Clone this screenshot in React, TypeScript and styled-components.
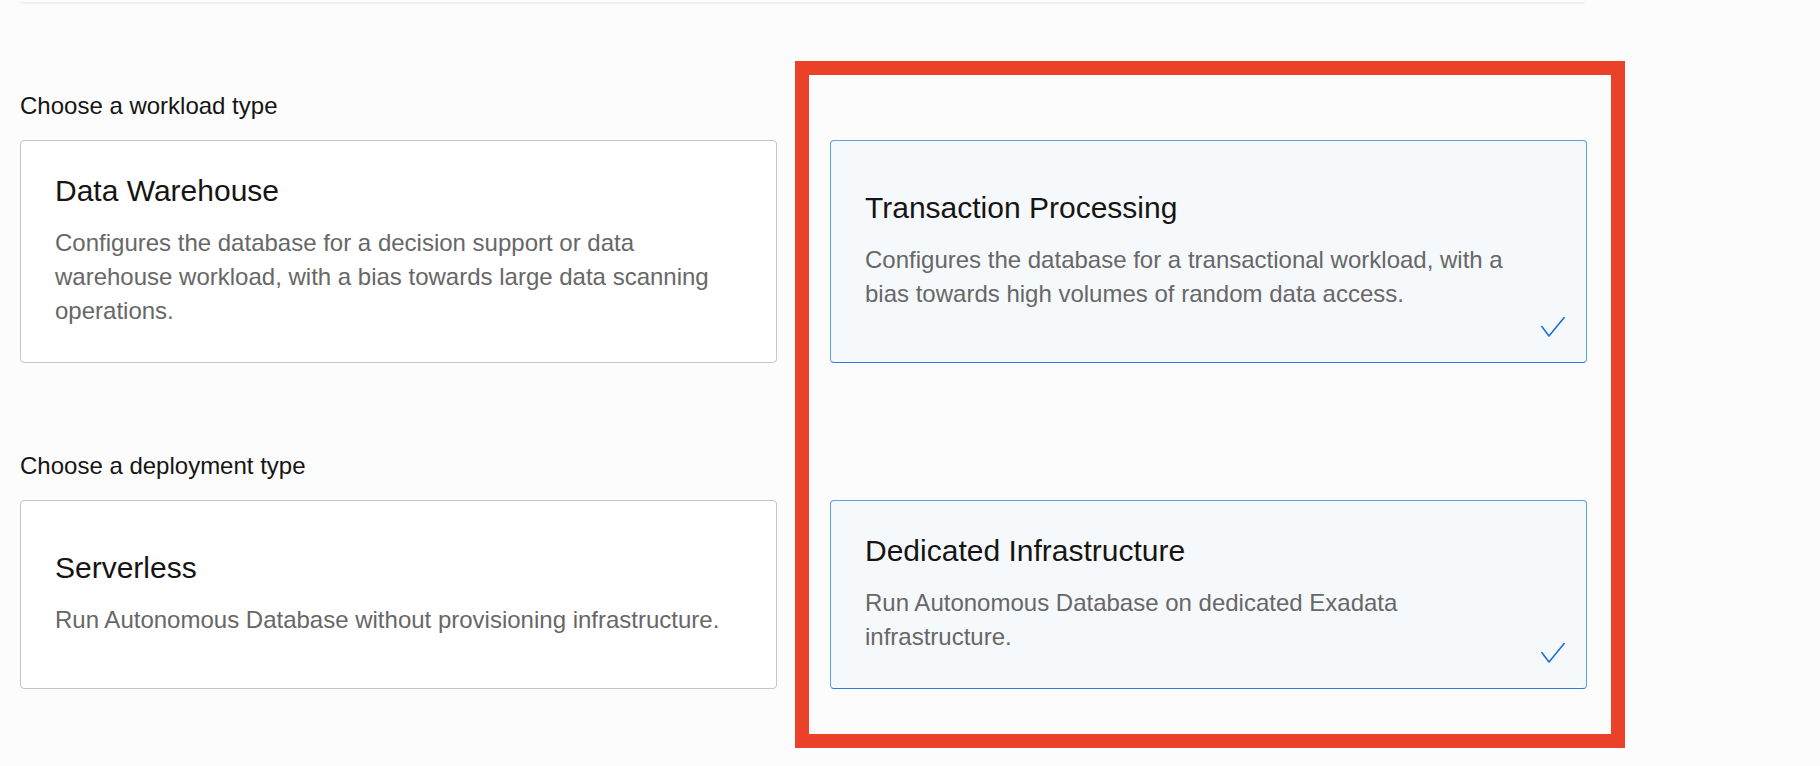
import React from "react";
import styled, { createGlobalStyle } from "styled-components";

const Global = createGlobalStyle`
  html, body { margin: 0; padding: 0; background: #fcfcfc; }
  body { font-family: "Liberation Sans", Arial, Helvetica, sans-serif; }
  * { box-sizing: border-box; }
`;

const Page = styled.div`
  position: relative;
  width: 1820px;
  height: 766px;
  overflow: hidden;
  padding-left: 20px;
`;

const TopCardStub = styled.div`
  width: 1565px;
  height: 3px;
  background: #ffffff;
  border-bottom: 1px solid #ececec;
  border-radius: 0 0 4px 4px;
  box-shadow: 0 1px 2px rgba(0, 0, 0, 0.05);
`;

const Section = styled.section<{ $gap: number }>`
  display: grid;
  grid-template-columns: 757px 757px;
  column-gap: 53px;
  margin-top: ${(p) => p.$gap}px;
`;

const Label = styled.div`
  grid-column: 1 / span 2;
  font-size: 24px;
  line-height: 33.6px;
  color: #161513;
  margin-bottom: 17.6px;
`;

const Card = styled.div<{ $selected?: boolean }>`
  position: relative;
  display: flex;
  flex-direction: column;
  justify-content: center;
  padding: 32px 40px 34px 34px;
  border-radius: 4px;
  border: 1px solid ${(p) => (p.$selected ? "#5f9fea" : "#c3c6ca")};
  border-bottom-color: ${(p) => (p.$selected ? "#2a7ddf" : "#c3c6ca")};
  background: ${(p) => (p.$selected ? "#f6f9fc" : "#ffffff")};
`;

const Title = styled.div`
  font-size: 30px;
  line-height: 36px;
  color: #161513;
  margin-bottom: 17px;
`;

const Desc = styled.div`
  font-size: 24px;
  line-height: 34px;
  color: #676767;
`;

const Check = styled.svg`
  position: absolute;
  right: 21px;
  bottom: 25px;
  width: 24px;
  height: 20px;
`;

const Highlight = styled.div`
  position: absolute;
  left: 795px;
  top: 61px;
  width: 830px;
  height: 687px;
  border: 14px solid #ea4128;
  pointer-events: none;
`;

type Opt = { title: string; desc: string; selected?: boolean };

const CheckMark = () => (
  <Check viewBox="0 0 24 20">
    <polyline
      points="0.8,9.6 8,19 23.2,0.6"
      fill="none"
      stroke="#1d6fd5"
      strokeWidth="1.6"
      strokeLinecap="round"
      strokeLinejoin="round"
    />
  </Check>
);

const OptionCard = ({ title, desc, selected }: Opt) => (
  <Card $selected={selected}>
    <Title>{title}</Title>
    <Desc>{desc}</Desc>
    {selected && <CheckMark />}
  </Card>
);

const sections: { label: string; gap: number; options: Opt[] }[] = [
  {
    label: "Choose a workload type",
    gap: 86,
    options: [
      {
        title: "Data Warehouse",
        desc: "Configures the database for a decision support or data warehouse workload, with a bias towards large data scanning operations.",
      },
      {
        title: "Transaction Processing",
        desc: "Configures the database for a transactional workload, with a bias towards high volumes of random data access.",
        selected: true,
      },
    ],
  },
  {
    label: "Choose a deployment type",
    gap: 86,
    options: [
      {
        title: "Serverless",
        desc: "Run Autonomous Database without provisioning infrastructure.",
      },
      {
        title: "Dedicated Infrastructure",
        desc: "Run Autonomous Database on dedicated Exadata infrastructure.",
        selected: true,
      },
    ],
  },
];

export default function App() {
  return (
    <>
      <Global />
      <Page>
        <TopCardStub />
        {sections.map((s) => (
          <Section key={s.label} $gap={s.gap}>
            <Label>{s.label}</Label>
            {s.options.map((o) => (
              <OptionCard key={o.title} {...o} />
            ))}
          </Section>
        ))}
        <Highlight />
      </Page>
    </>
  );
}
